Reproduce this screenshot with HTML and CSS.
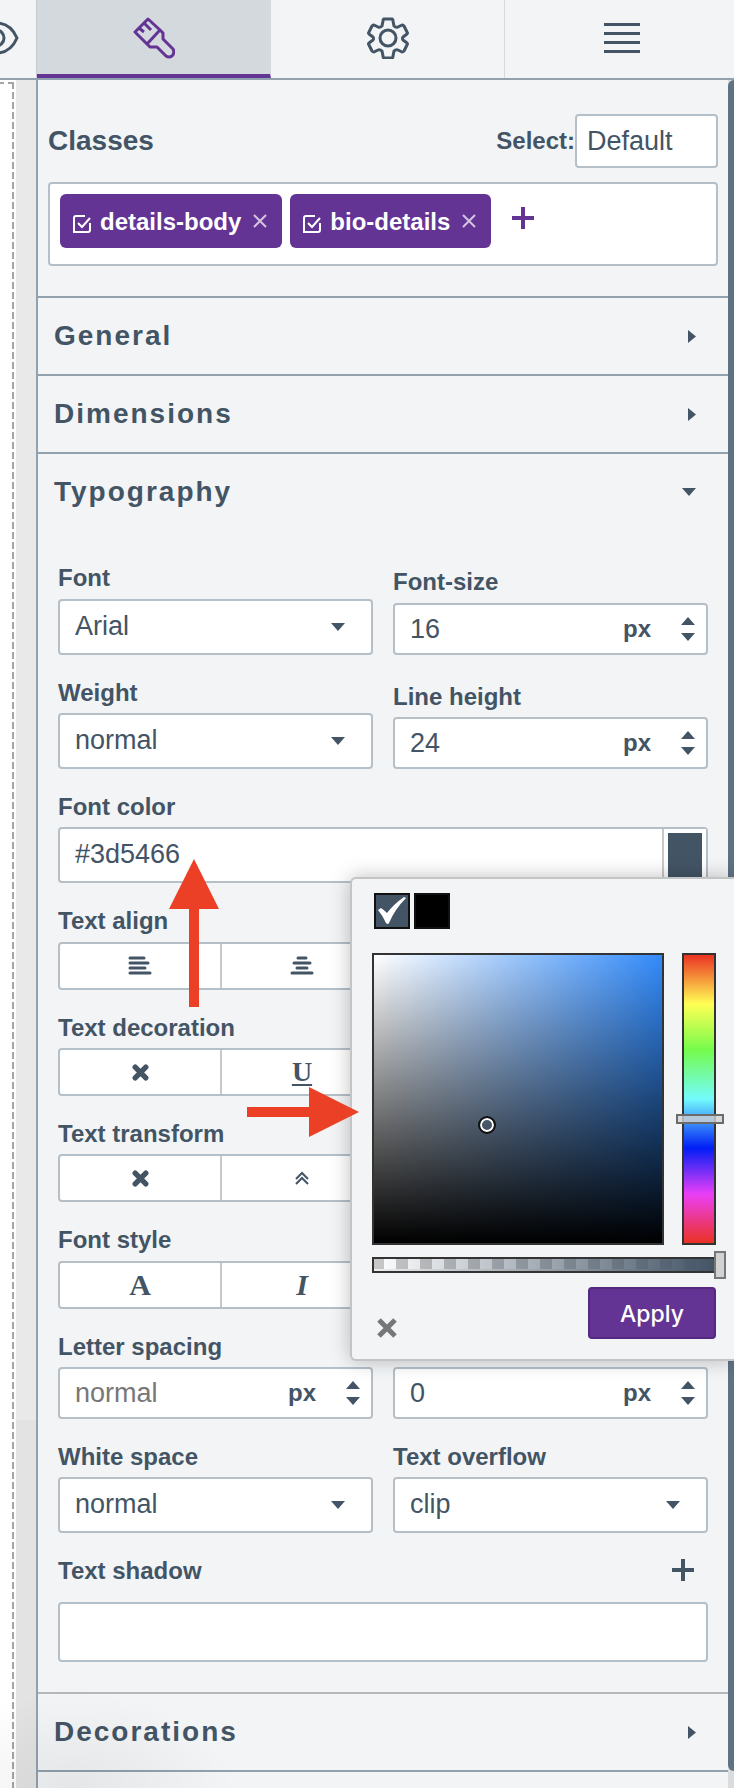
FILE: index.html
```html
<!DOCTYPE html>
<html lang="en">
<head>
<meta charset="utf-8">
<title>Style manager</title>
<link rel="stylesheet" href="styles.css">
</head>
<body>
<svg class="symbols" width="0" height="0" aria-hidden="true">
  <symbol id="cross" viewBox="0 0 16 16"><path d="M3 3l10 10M13 3L3 13" fill="none" stroke="currentColor" stroke-width="5" stroke-linecap="round"/></symbol>
  <symbol id="check-box" viewBox="0 0 18 18"><path d="M12 1H3Q1 1 1 3V17H15Q17 17 17 15V8M5 8l4 4 8-9" fill="none" stroke="currentColor" stroke-width="2"/></symbol>
  <symbol id="remove" viewBox="0 0 14 14"><path d="M1 1l12 12M13 1L1 13" fill="none" stroke="currentColor" stroke-width="2"/></symbol>
  <symbol id="plus" viewBox="0 0 22 22"><path d="M11 0v22M0 11h22" fill="none" stroke="currentColor" stroke-width="4"/></symbol>
  <symbol id="up" viewBox="0 0 14 8"><path d="M0 8L7 0l7 8z" fill="currentColor"/></symbol>
  <symbol id="down" viewBox="0 0 14 8"><path d="M0 0h14L7 8z" fill="currentColor"/></symbol>
  <symbol id="right" viewBox="0 0 7 12" preserveAspectRatio="none"><path d="M0 0v12l7-6z" fill="currentColor"/></symbol>
</svg>
<div class="page">
  <nav class="tabs">
    <button class="tab tab-preview" aria-label="Preview"><svg width="19" height="34" viewBox="0 0 19 34" fill="none" stroke="currentColor" stroke-width="3"><path d="M-2 2Q11 3 17 17Q11 31-2 32"/><circle cx="-4" cy="17" r="8"/></svg></button>
    <button class="tab tab-active" aria-label="Styles"><svg width="42" height="42" viewBox="0 0 42 42" fill="none" stroke="currentColor" stroke-width="3" stroke-linejoin="round"><path d="M15 2L2 15l12 12 3 3h7l9 9q3 2 6 0 3-3 1-7l-10-10v-6l-3-3zM14 27l13-14"/><path d="M11 6l7 7M6 11l5 4" /></svg></button>
    <button class="tab" aria-label="Settings"><svg width="42" height="42" viewBox="0 0 42 42" fill="none" stroke="currentColor" stroke-width="3" stroke-linejoin="round"><path d="M17 2h8q1 0 1 2l1 5q2 2 4 1l4-2q1 0 2 1l3 6q1 1 0 2l-4 3q-1 1 0 3l4 3q1 1 0 2l-3 6q-1 1-2 1l-4-2q-2-1-4 1l-1 5q0 2-1 2h-8q-1 0-1-2l-1-5q-2-2-4-1l-4 2q-1 0-2-1l-3-6q-1-1 0-2l4-3q1-1 0-3l-4-3q-1-1 0-2l3-6q1-1 2-1l4 2q2 1 4-1l1-5q0-2 1-2z"/><circle cx="21" cy="21" r="8"/></svg></button>
    <button class="tab" aria-label="Layers"><svg width="36" height="30" viewBox="0 0 36 30" fill="currentColor"><path d="M0 0h36v3H0zM0 9h36v3H0zM0 18h36v3H0zM0 27h36v3H0z"/></svg></button>
  </nav>
  <div class="workspace">
    <div class="canvas"></div>
    <div class="gutter"></div>
    <main class="panel">
      <section class="classes">
        <div class="classes-head">
          <h2 class="classes-title">Classes</h2>
          <label class="label" for="state">Select:</label>
          <select class="state-select" id="state"><option>Default</option></select>
        </div>
        <div class="tags">
          <span class="tag"><svg width="18" height="18"><use href="#check-box"/></svg><span class="tag-name">details-body</span><button class="icon-button tag-remove" aria-label="Remove details-body"><svg width="14" height="14"><use href="#remove"/></svg></button></span>
          <span class="tag"><svg width="18" height="18"><use href="#check-box"/></svg><span class="tag-name">bio-details</span><button class="icon-button tag-remove" aria-label="Remove bio-details"><svg width="14" height="14"><use href="#remove"/></svg></button></span>
          <button class="icon-button tag-add" aria-label="Add class"><svg width="22" height="22"><use href="#plus"/></svg></button>
        </div>
      </section>
      <section class="section"><button class="section-head">General<svg width="8" height="13"><use href="#right"/></svg></button></section>
      <section class="section"><button class="section-head">Dimensions<svg width="8" height="13"><use href="#right"/></svg></button></section>
      <section class="section">
        <button class="section-head" aria-expanded="true">Typography<svg width="14" height="8"><use href="#down"/></svg></button>
        <div class="fields">
          <div class="field">
            <label class="label" for="font">Font</label>
            <div class="box select-box"><select id="font"><option>Arial</option></select></div>
          </div>
          <div class="field">
            <label class="label" for="size">Font-size</label>
            <div class="box number-box"><input id="size" type="text" value="16"><span class="unit">px</span><span class="spin"><button class="icon-button" aria-label="Increase"><svg width="14" height="8"><use href="#up"/></svg></button><button class="icon-button" aria-label="Decrease"><svg width="14" height="8"><use href="#down"/></svg></button></span></div>
          </div>
          <div class="field">
            <label class="label" for="weight">Weight</label>
            <div class="box select-box"><select id="weight"><option>normal</option></select></div>
          </div>
          <div class="field">
            <label class="label" for="line">Line height</label>
            <div class="box number-box"><input id="line" type="text" value="24"><span class="unit">px</span><span class="spin"><button class="icon-button" aria-label="Increase"><svg width="14" height="8"><use href="#up"/></svg></button><button class="icon-button" aria-label="Decrease"><svg width="14" height="8"><use href="#down"/></svg></button></span></div>
          </div>
          <div class="field field-wide">
            <label class="label" for="color">Font color</label>
            <div class="box color-box"><input id="color" type="text" value="#3d5466"><button class="color-swatch" aria-label="Pick a color"></button></div>
            <div class="picker">
              <div class="palette">
                <button class="palette-item palette-current" aria-label="#3d5466"><svg width="32" height="32" viewBox="0 0 32 32"><path d="M2 15l3-2q3 2 6 5Q18 9 28 2l2 1Q19 14 13 28q-1 2-3 0Q7 21 2 15z" fill="#fff"/></svg></button>
                <button class="palette-item palette-black" aria-label="#000000"></button>
              </div>
              <div class="picker-main">
                <div class="shade"><span class="shade-knob"></span></div>
                <div class="hue"><span class="hue-knob"></span></div>
              </div>
              <div class="alpha"><span class="alpha-knob"></span></div>
              <div class="picker-actions">
                <button class="icon-button picker-clear" aria-label="Clear"><svg width="20" height="20" viewBox="0 0 20 20"><path d="M2 2l16 16M18 2L2 18" stroke="currentColor" stroke-width="5"/></svg></button>
                <button class="apply">Apply</button>
              </div>
            </div>
          </div>
          <div class="field field-wide field-loose" role="group" aria-labelledby="align-label">
            <span class="label" id="align-label">Text align</span>
            <div class="box segments">
              <button><svg width="24" height="20" viewBox="0 0 24 20" stroke="currentColor" stroke-width="3" stroke-linecap="round"><path d="M2 2h14M2 7h18M2 12h15M2 17h20"/></svg></button>
              <button><svg width="24" height="20" viewBox="0 0 24 20" stroke="currentColor" stroke-width="3" stroke-linecap="round"><path d="M8 2h8M4 7h16M7 12h10M2 17h20"/></svg></button>
              <button></button><button></button>
            </div>
          </div>
          <div class="field field-wide" role="group" aria-labelledby="decoration-label">
            <span class="label" id="decoration-label">Text decoration</span>
            <div class="box segments">
              <button><svg width="17" height="17"><use href="#cross"/></svg></button>
              <button class="letter letter-underline">U</button>
              <button></button><button></button>
            </div>
          </div>
          <div class="field field-wide" role="group" aria-labelledby="transform-label">
            <span class="label" id="transform-label">Text transform</span>
            <div class="box segments">
              <button><svg width="17" height="17"><use href="#cross"/></svg></button>
              <button><svg width="14" height="14" viewBox="0 0 14 14" fill="none" stroke="currentColor" stroke-width="2"><path d="M1 8l6-6 6 6M1 13l6-6 6 6"/></svg></button>
              <button></button><button></button>
            </div>
          </div>
          <div class="field field-wide field-loose" role="group" aria-labelledby="style-label">
            <span class="label" id="style-label">Font style</span>
            <div class="box segments">
              <button class="letter">A</button>
              <button class="letter letter-italic">I</button>
              <button></button><button></button>
            </div>
          </div>
          <div class="field">
            <label class="label" for="spacing">Letter spacing</label>
            <div class="box number-box"><input id="spacing" type="text" placeholder="normal"><span class="unit">px</span><span class="spin"><button class="icon-button" aria-label="Increase"><svg width="14" height="8"><use href="#up"/></svg></button><button class="icon-button" aria-label="Decrease"><svg width="14" height="8"><use href="#down"/></svg></button></span></div>
          </div>
          <div class="field">
            <div class="box number-box"><input aria-label="Indent" type="text" value="0"><span class="unit">px</span><span class="spin"><button class="icon-button" aria-label="Increase"><svg width="14" height="8"><use href="#up"/></svg></button><button class="icon-button" aria-label="Decrease"><svg width="14" height="8"><use href="#down"/></svg></button></span></div>
          </div>
          <div class="field">
            <label class="label" for="white">White space</label>
            <div class="box select-box"><select id="white"><option>normal</option></select></div>
          </div>
          <div class="field">
            <label class="label" for="overflow">Text overflow</label>
            <div class="box select-box"><select id="overflow"><option>clip</option></select></div>
          </div>
          <div class="field field-wide field-shadow">
            <div class="shadow-head"><span class="label">Text shadow</span><button class="icon-button" aria-label="Add text shadow"><svg width="22" height="22"><use href="#plus"/></svg></button></div>
            <div class="box shadow-list"></div>
          </div>
        </div>
      </section>
      <section class="section section-gray"><button class="section-head">Decorations<svg width="8" height="13"><use href="#right"/></svg></button></section>
      <section class="section section-next"></section>
    </main>
    <div class="scrollbar"><div class="thumb"></div></div>
  </div>
  <svg class="arrow arrow-up" width="50" height="148" viewBox="0 0 50 148"><path d="M25 0l25 50H30v98H20V50H0z"/></svg>
  <svg class="arrow arrow-right" width="112" height="50" viewBox="0 0 112 50"><path d="M112 25L62 50V30H0V20h62V0z"/></svg>
  <div class="vignette"></div>
</div>
</body>
</html>
```
FILE: styles.css
```css
* { box-sizing: border-box; }

body {
  margin: 0;
  background: #f2f4f6;
  color: #435465;
  font-family: "Liberation Sans", Arial, sans-serif;
  font-size: 27px;
}

button, input, select { font: inherit; color: inherit; margin: 0; }
button { border: 0; padding: 0; background: none; cursor: pointer; }
svg { display: block; flex: none; }
.symbols { position: absolute; }

.page {
  position: relative;
  display: flex;
  flex-direction: column;
  min-height: 100vh;
  overflow: hidden;
}

/* Tabs */
.tabs {
  display: flex;
  height: 80px;
  border-bottom: 2px solid #92a1ae;
  overflow: hidden;
}
.tab {
  flex: 1 0 234px;
  display: flex;
  align-items: center;
  justify-content: center;
  padding-bottom: 2px;
  border-right: 1px solid #d6dade;
}
.tab-preview { flex: 0 0 37px; justify-content: flex-start; border-color: #c5cacf; }
.tab-active {
  padding: 2px 0 0;
  background: #d3d9dd;
  border-bottom: 4px solid #633494;
  color: #633494;
}

/* Workspace */
.workspace { flex: 1; display: flex; }
.canvas {
  width: 16px;
  background:
    repeating-linear-gradient(#a5a5a5 0 7px, #fff 7px 10px) 12px 2px / 2px 100% no-repeat,
    repeating-linear-gradient(90deg, #a5a5a5 0 4px, #fff 4px 8px, #a5a5a5 8px 14px) 0 2px / 14px 2px no-repeat,
    #fff;
}
.gutter {
  width: 20px;
  background: linear-gradient(#e9e9e9 1340px, #e3e3e3 1340px);
}
.panel { flex: 1; min-width: 0; border-left: 2px solid #92a1ae; }
.scrollbar { width: 6px; background: #d9dbdd; padding-bottom: 17px; }
.thumb { height: 100%; background: #5d7285; border-radius: 6px 0 0 6px; }

/* Classes */
.classes { padding: 34px 10px 30px; }
.classes-head { display: flex; align-items: center; margin-bottom: 14px; }
.classes-title { flex: 1; margin: 0; font-size: 28px; }
.label { font-size: 24px; font-weight: bold; line-height: 28px; }
.state-select {
  appearance: none;
  width: 143px;
  height: 54px;
  padding: 0 10px;
  border: 2px solid #b5bfc8;
  border-radius: 4px;
  background: #fff;
}
.tags {
  display: flex;
  flex-wrap: wrap;
  gap: 8px;
  min-height: 84px;
  padding: 10px;
  border: 2px solid #b5bfc8;
  border-radius: 4px;
  background: #fff;
}
.tag {
  display: flex;
  align-items: center;
  height: 54px;
  padding: 0 15px 0 13px;
  border-radius: 6px;
  background: #633494;
  color: #fff;
  font-size: 24px;
  font-weight: bold;
}
.tag > svg { margin-top: 6px; }
.tag-name { margin: 0 12px 0 9px; padding-top: 2px; }
.tag-remove { color: #d3c4e0; }
.icon-button { display: flex; align-items: center; }
.tag-add { height: 48px; margin-left: 13px; color: #633494; }

/* Sections */
.section { border-top: 2px solid #92a1ae; }
.section-gray { border-color: #b4b7ba; }
.section-head {
  display: flex;
  align-items: center;
  justify-content: space-between;
  width: 100%;
  height: 76px;
  padding: 0 32px 0 16px;
  font-size: 28px;
  font-weight: bold;
  letter-spacing: 2px;
}
.fields {
  display: grid;
  grid-template-columns: 1fr 1fr;
  gap: 24px 20px;
  padding: 34px 20px 30px;
}
.field { position: relative; display: flex; flex-direction: column; gap: 6px; }
.fields > .field:nth-child(-n+4):nth-child(even) { margin: 4px 0 -4px; }
.fields > .field:nth-child(-n+2), .field-loose { gap: 7px; }
.field-wide { grid-column: 1 / -1; }
.field:not(:has(.label)) { justify-content: flex-end; }
.box { display: flex; border: 2px solid #b5bfc8; border-radius: 4px; background: #fff; }
.box input, .box select {
  flex: 1;
  min-width: 0;
  width: 100%;
  padding: 0 15px 2px;
  border: 0;
  background: none;
  appearance: none;
  outline: 0;
}
.box input::placeholder { color: #777; opacity: 1; }
.select-box { height: 56px; position: relative; }
.select-box::after {
  content: "";
  position: absolute;
  right: 26px;
  top: 22px;
  border: 7px solid transparent;
  border-top: 8px solid #435465;
  border-bottom: 0;
  pointer-events: none;
}
.number-box { height: 52px; align-items: center; padding-right: 11px; }
.number-box input { padding-bottom: 0; }
.unit { margin-right: 30px; font-size: 24px; font-weight: bold; }
.spin { display: flex; flex-direction: column; gap: 8px; }
.color-box { height: 56px; }
.color-swatch {
  width: 42px;
  border: 4px solid #fff;
  background: #435465;
  box-shadow: -2px 0 #c8c8c8;
}
.segments { height: 48px; }
.segments button { flex: 1; display: flex; align-items: center; justify-content: center; }
.segments button + button { border-left: 2px solid #c8c8c8; }
.segments .letter { font: bold 30px "Liberation Serif", serif; }
.segments .letter-underline { font-size: 28px; text-decoration: underline; text-underline-offset: 3px; text-decoration-thickness: 2px; }
.segments .letter-italic { font-style: italic; }
.field-shadow { gap: 17px; }
.shadow-head { display: flex; justify-content: space-between; align-items: flex-start; padding-right: 14px; }
.shadow-head .icon-button { padding-top: 2px; }
.shadow-list { height: 60px; }

/* Color picker */
.picker {
  position: absolute;
  z-index: 2;
  top: 84px;
  right: -26px;
  width: 384px;
  padding: 14px 18px 20px 20px;
  border: 2px solid #c3c4c6;
  border-right: 0;
  border-radius: 6px 0 0 6px;
  background: #f2f4f6;
  box-shadow: 0 0 20px rgba(0, 0, 0, .25);
}
.palette { display: flex; gap: 4px; margin: 0 0 24px 2px; }
.palette-item { width: 36px; height: 36px; border: 2px solid #111; }
.palette-current { background: #435465; }
.palette-black { background: #000; }
.picker-main { display: flex; gap: 18px; margin-bottom: 12px; }
.shade {
  position: relative;
  flex: 1;
  height: 292px;
  border: 2px solid #333;
  background: linear-gradient(transparent, #000), linear-gradient(90deg, #fff, #338bfa);
}
.shade-knob {
  position: absolute;
  left: 104px;
  top: 161px;
  width: 18px;
  height: 18px;
  border: 2px solid #111;
  border-radius: 50%;
  box-shadow: inset 0 0 0 2px #fff;
}
.hue {
  position: relative;
  width: 34px;
  border: 2px solid #333;
  background: linear-gradient(#eb3223, #ffff54 17%, #75fb4c 33%, #73fbfd 50%, #001ef5 67%, #ea3ff7 83%, #eb3223);
}
.hue-knob {
  position: absolute;
  left: -8px;
  top: 159px;
  width: 48px;
  height: 10px;
  border: 2px solid #6b6b6b;
  background: rgba(210, 210, 210, .8);
}
.alpha {
  position: relative;
  height: 16px;
  border: 2px solid #333;
  background:
    linear-gradient(90deg, transparent, #435465),
    repeating-linear-gradient(90deg, #c8c8c8 0 10px, #fff 10px 22px, #c8c8c8 22px 24px) 0 0 / 100% 10px no-repeat,
    #eee;
}
.alpha-knob {
  position: absolute;
  right: -12px;
  top: -8px;
  width: 12px;
  height: 28px;
  border: 2px solid #777;
  background: #d2d2d2;
}
.picker-actions {
  display: flex;
  justify-content: space-between;
  align-items: flex-end;
  margin-top: 14px;
}
.picker-clear { margin: 0 0 1px 5px; color: #777; }
.apply {
  width: 128px;
  height: 52px;
  padding-top: 2px;
  border: 2px solid #54297f;
  border-radius: 4px;
  background: #633494;
  color: #fff;
  font: 500 23px Inter, sans-serif;
}

/* Annotations */
.arrow { position: absolute; z-index: 3; fill: #eb4026; }
.arrow-up { left: 169px; top: 859px; }
.arrow-right { left: 247px; top: 1087px; }
.vignette {
  position: absolute;
  left: 0;
  bottom: 0;
  width: 240px;
  height: 100px;
  background: radial-gradient(ellipse at 30% 100%, rgba(0, 0, 0, .06), transparent 68%);
  pointer-events: none;
}
```
